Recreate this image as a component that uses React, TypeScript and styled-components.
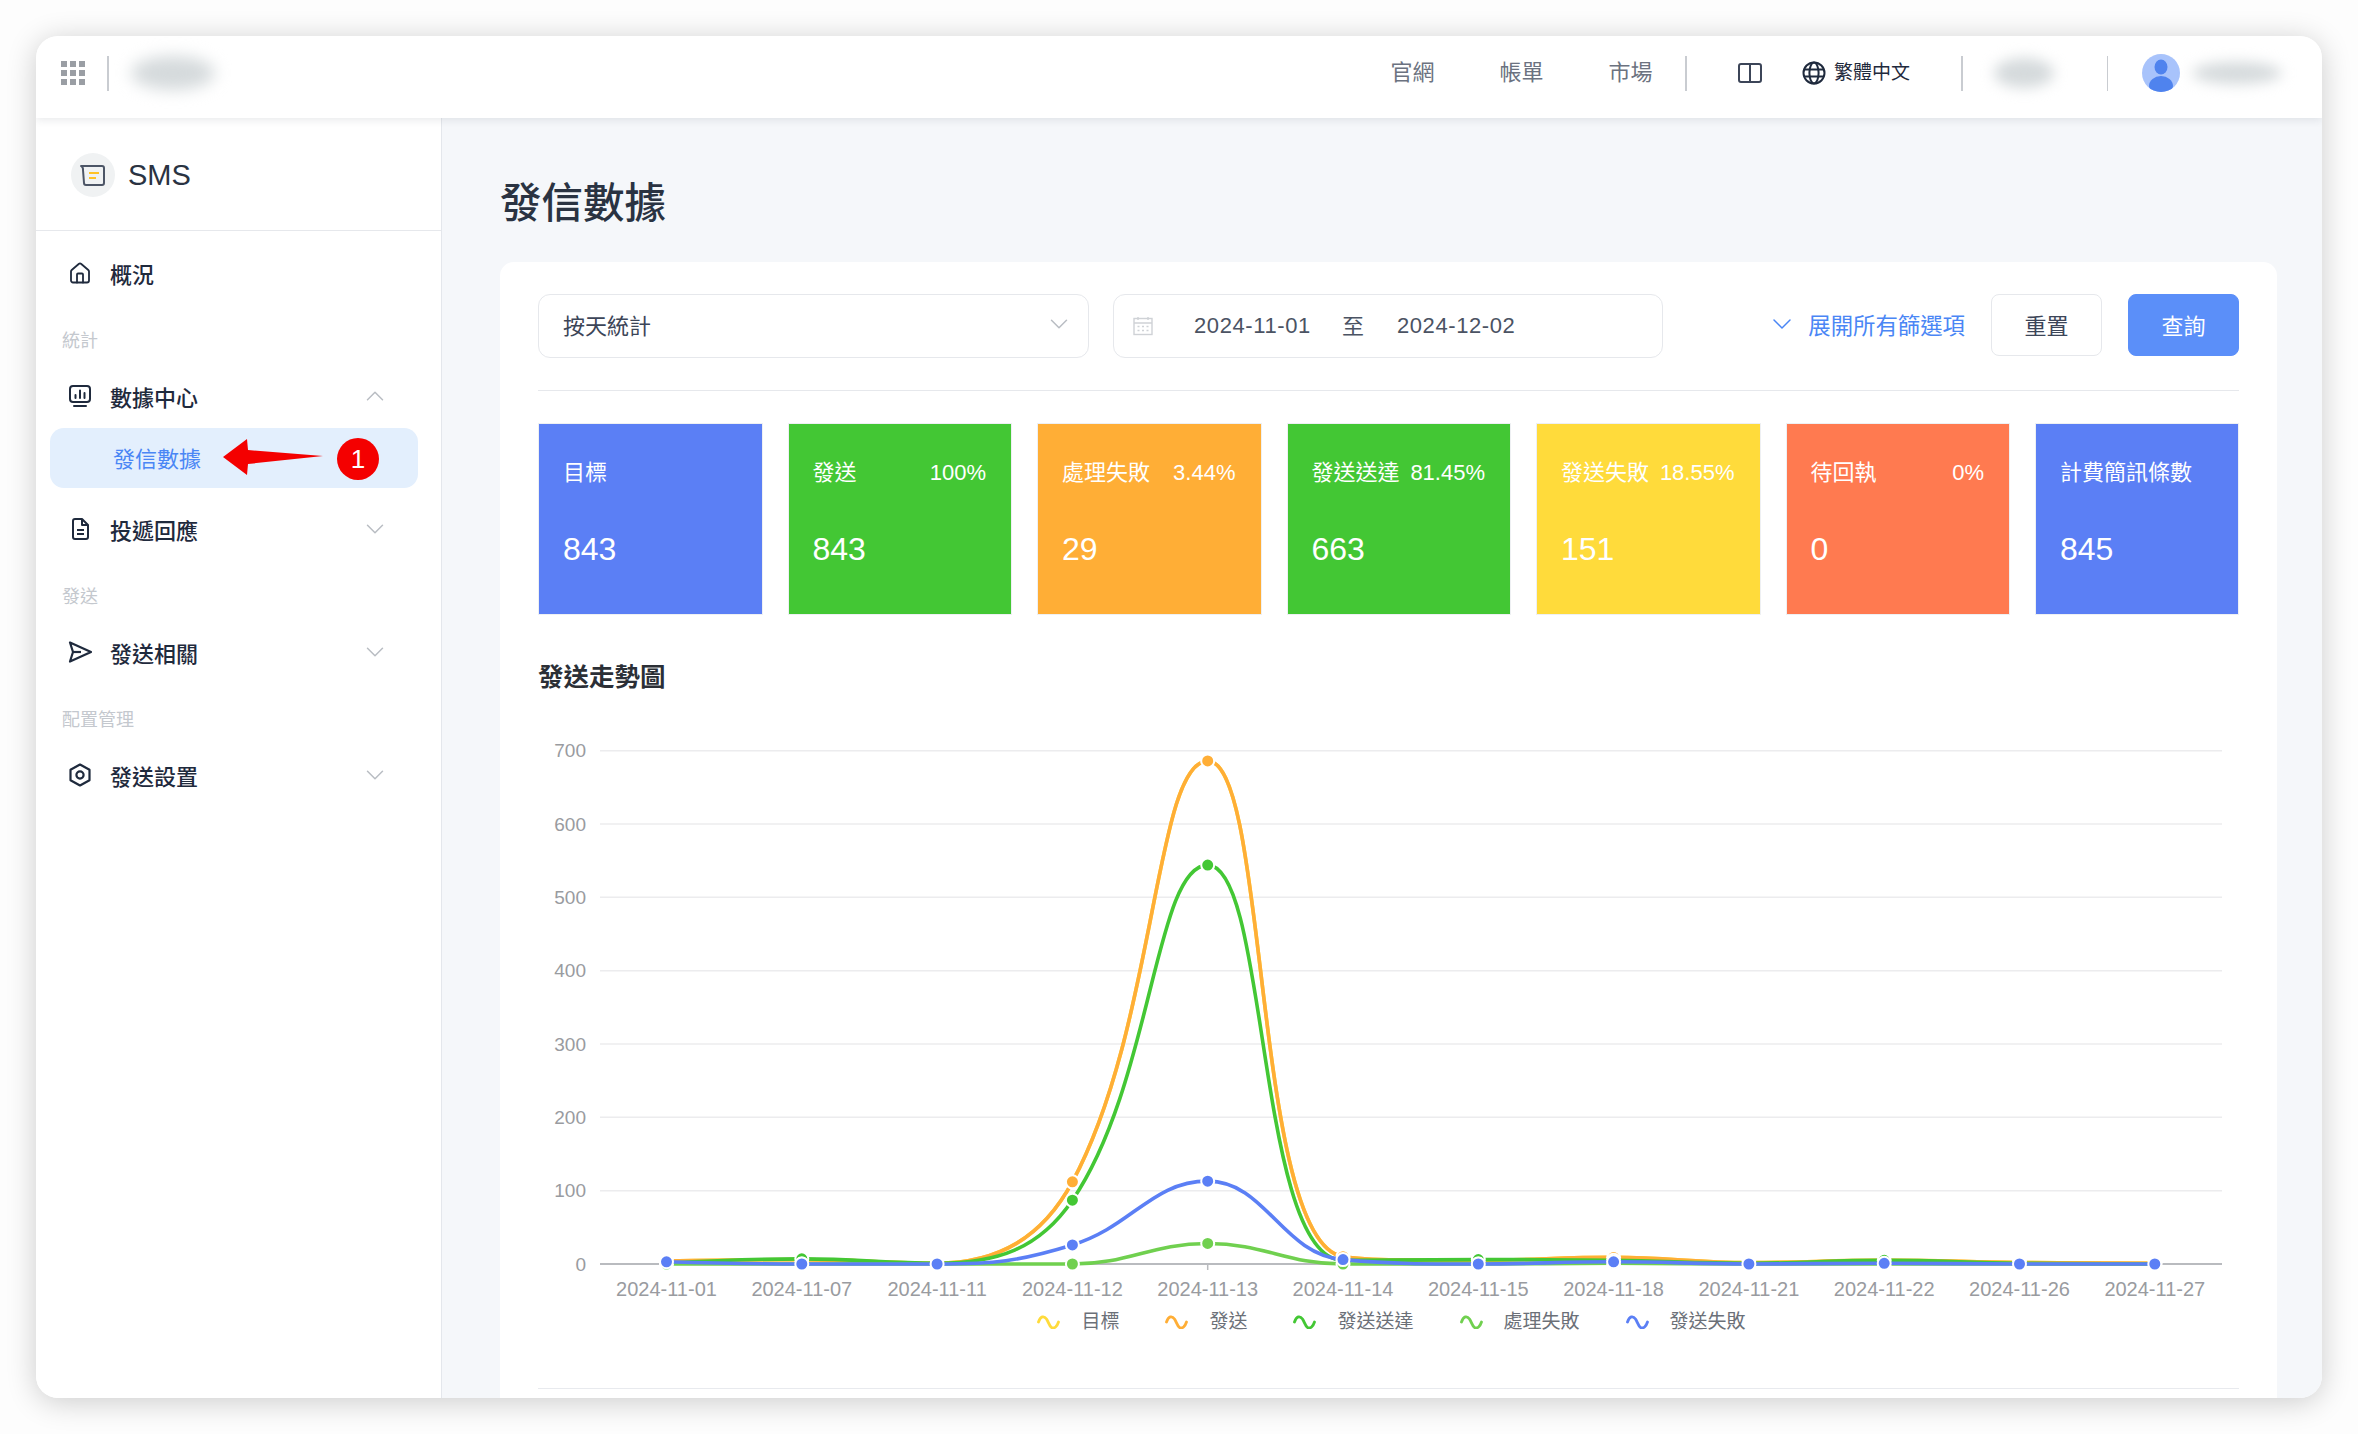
import React, { FC } from "react";
import styled, { createGlobalStyle } from "styled-components";
import { ChevronDown, ChevronUp, House } from "lucide-react";

const GlobalStyle = createGlobalStyle`
  html, body {
    margin: 0;
    padding: 0;
    background: #ffffff;
  }
  * {
    box-sizing: border-box;
  }
  body {
    font-family: "Liberation Sans", "Noto Sans CJK TC", sans-serif;
    color: #1f2a3d;
  }
`;

const Page = styled.div`
  width: 2358px;
  height: 1434px;
  padding: 36px;
  overflow: hidden;
  background: #fdfdfd;
`;

const Window = styled.div`
  display: flex;
  flex-direction: column;
  width: 2286px;
  height: 1362px;
  overflow: hidden;
  background: #ffffff;
  border-radius: 22px;
  box-shadow: 0 4px 30px rgba(0, 0, 0, 0.2);
`;

const TopBar = styled.header`
  position: relative;
  z-index: 2;
  display: flex;
  flex: none;
  align-items: center;
  height: 82px;
  padding-bottom: 8px;
  background: #ffffff;
  box-shadow: 0 2px 8px rgba(30, 40, 60, 0.1);
`;

const TopLeft = styled.div`
  display: flex;
  flex: 1;
  align-items: center;
  gap: 22px;
  padding-left: 25px;
`;

const Separator = styled.span`
  flex: none;
  width: 1.5px;
  height: 35px;
  background: #c9ccd1;
`;

const LogoBlur = styled.div`
  width: 84px;
  height: 34px;
  border-radius: 50%;
  background: #d5dadc;
  filter: blur(8px);
`;

const TopLinks = styled.nav`
  display: flex;
  gap: 65px;
  padding: 0 33px;
`;

const TopLink = styled.a`
  font-size: 22px;
  line-height: 30px;
  color: #6b7280;
`;

const Tools = styled.div`
  display: flex;
  align-items: center;
  padding: 0 51px;
`;

const LangGroup = styled.div`
  display: flex;
  align-items: center;
  gap: 8px;
  margin-left: 40px;
`;

const LangLabel = styled.span`
  font-size: 19px;
  line-height: 30px;
  color: #1f2a3d;
`;

const ChipSlot = styled.div`
  display: flex;
  justify-content: center;
  width: 144px;
  padding-right: 22px;
`;

const Chip = styled.div<{ $width: number; $height: number }>`
  width: ${(p) => p.$width}px;
  height: ${(p) => p.$height}px;
  border-radius: 50%;
  background: #d5dadc;
  filter: blur(7px);
`;

const UserBox = styled.div`
  display: flex;
  align-items: center;
  gap: 12px;
  padding: 0 40px 0 34px;
`;

const Body = styled.div`
  display: flex;
  flex: 1;
  min-height: 0;
`;

const Sidebar = styled.aside`
  flex: none;
  width: 406px;
  background: #ffffff;
  border-right: 1.5px solid #e4e7ec;
`;

const SideHead = styled.div`
  display: flex;
  align-items: center;
  gap: 13px;
  height: 113px;
  padding: 2px 0 0 35px;
  border-bottom: 1.5px solid #e6e8ec;
`;

const SideLogo = styled.div`
  display: flex;
  align-items: center;
  justify-content: center;
  width: 44px;
  height: 44px;
  border-radius: 50%;
  background: #f0f2f3;
`;

const SideTitle = styled.span`
  font-size: 29px;
  line-height: 36px;
  color: #2a3342;
`;

const Nav = styled.nav`
  padding-top: 12px;
`;

const NavItem = styled.div`
  display: flex;
  align-items: center;
  gap: 18px;
  height: 60px;
  padding: 0 51px 0 32px;
  font-size: 22px;
  font-weight: 500;
  color: #1f2a3d;
`;

const NavText = styled.span`
  flex: 1;
`;

const IconBox = styled.span`
  display: flex;
  flex: none;
  align-items: center;
  justify-content: center;
  width: 24px;
  height: 24px;
`;

const NavLabel = styled.div`
  height: 63px;
  padding: 25px 0 0 26px;
  font-size: 18px;
  line-height: 26px;
  color: #c4c8ce;
`;

const ActiveItem = styled.div`
  position: relative;
  height: 60px;
  margin: 2px 23px 11px 14px;
  padding-left: 63px;
  border-radius: 14px;
  background: #e3effd;
  font-size: 22px;
  line-height: 64px;
  color: #4a86f5;
`;

const RedArrow = styled.svg`
  position: absolute;
  top: 11px;
  left: 173px;
`;

const RedBadge = styled.span`
  position: absolute;
  top: 10px;
  left: 287px;
  width: 42px;
  height: 42px;
  border-radius: 50%;
  background: #f40000;
  font-size: 26px;
  line-height: 42px;
  text-align: center;
  color: #ffffff;
`;

const Main = styled.main`
  flex: 1;
  min-width: 0;
  overflow: hidden;
  padding: 0 45px 0 58px;
  background: #f5f7fa;
`;

const PageTitle = styled.h1`
  height: 144px;
  margin: 0;
  font-size: 41.5px;
  font-weight: 500;
  line-height: 171px;
  color: #2a3342;
`;

const Card = styled.section`
  height: 1200px;
  padding: 32px 38px;
  border-radius: 14px;
  background: #ffffff;
`;

const Filters = styled.div`
  display: flex;
  align-items: flex-start;
  padding-bottom: 32px;
  border-bottom: 1.5px solid #e6e8ec;
`;

const SelectBox = styled.div`
  display: flex;
  align-items: center;
  justify-content: space-between;
  width: 551px;
  height: 64px;
  padding: 0 14px 5px 24px;
  border: 1.5px solid #e6e8ec;
  border-radius: 12px;
  font-size: 22px;
  color: #3c4558;
`;

const DateBox = styled.div`
  display: flex;
  align-items: center;
  width: 550px;
  height: 64px;
  margin-left: 24px;
  padding-left: 19px;
  border: 1.5px solid #e6e8ec;
  border-radius: 12px;
  font-size: 22px;
  color: #4b5363;
`;

const DateValue = styled.span<{ $first?: boolean }>`
  margin-left: ${(p) => (p.$first ? 41 : 0)}px;
  letter-spacing: 0.6px;
`;

const DateGap = styled.span`
  margin: 0 33px 0 31px;
  padding-bottom: 5px;
`;

const Expand = styled.a`
  display: flex;
  align-items: center;
  gap: 10px;
  height: 62px;
  margin-left: auto;
  padding-bottom: 2px;
  font-size: 22.4px;
  color: #4a86f5;
`;

const Button = styled.button<{ $primary?: boolean }>`
  width: 111px;
  height: 62px;
  margin-left: 26px;
  padding: 0 0 3px;
  border: 1.5px solid ${(p) => (p.$primary ? "#5b8ff9" : "#e6e8ec")};
  border-radius: 8px;
  background: ${(p) => (p.$primary ? "#5b8ff9" : "#ffffff")};
  font-family: inherit;
  font-size: 22px;
  color: ${(p) => (p.$primary ? "#ffffff" : "#3c4558")};
`;

const Stats = styled.div`
  display: grid;
  grid-template-columns: repeat(6, 1fr) 204px;
  gap: 25px;
  margin-top: 32px;
`;

const StatCard = styled.div<{ $bg: string }>`
  height: 192px;
  padding: 34px 25px 0 24px;
  border: 1px solid #eef0f3;
  background: ${(p) => p.$bg};
  color: #ffffff;
`;

const StatHead = styled.div`
  display: flex;
  justify-content: space-between;
  font-size: 22px;
  line-height: 30px;
  white-space: nowrap;
`;

const StatValue = styled.div`
  margin-top: 41px;
  font-size: 32px;
  line-height: 40px;
`;

const ChartTitle = styled.h2`
  margin: 44px 0 0;
  font-size: 25.5px;
  font-weight: 700;
  line-height: 36px;
  color: #2b2f36;
`;

const ChartSvg = styled.svg`
  display: block;
  margin-top: 43px;
`;

const AxisText = styled.text<{ $size: number }>`
  font-family: "Liberation Sans", sans-serif;
  font-size: ${(p) => p.$size}px;
  fill: #999ba0;
`;

const Legend = styled.div`
  display: flex;
  justify-content: center;
  gap: 46px;
  height: 81px;
  margin-top: -12px;
  padding-left: 6px;
  border-bottom: 1.5px solid #e8eaee;
`;

const LegendItem = styled.div`
  display: flex;
  align-items: flex-start;
  gap: 21px;
  font-size: 19px;
  line-height: 28px;
  color: #6b7078;

  svg {
    margin-top: 7px;
  }
`;

const NAVY = "#1f2a3d";

const BLUE = "#5b7ff5";
const GREEN = "#43c734";
const ORANGE = "#ffae36";
const YELLOW = "#ffdb3b";
const CORAL = "#ff7a50";
const LIME = "#70d04f";

const stats = [
  { label: "目標", pct: "", value: "843", bg: BLUE },
  { label: "發送", pct: "100%", value: "843", bg: GREEN },
  { label: "處理失敗", pct: "3.44%", value: "29", bg: ORANGE },
  { label: "發送送達", pct: "81.45%", value: "663", bg: GREEN },
  { label: "發送失敗", pct: "18.55%", value: "151", bg: YELLOW },
  { label: "待回執", pct: "0%", value: "0", bg: CORAL },
  { label: "計費簡訊條數", pct: "", value: "845", bg: BLUE },
];

const dates = [
  "2024-11-01",
  "2024-11-07",
  "2024-11-11",
  "2024-11-12",
  "2024-11-13",
  "2024-11-14",
  "2024-11-15",
  "2024-11-18",
  "2024-11-21",
  "2024-11-22",
  "2024-11-26",
  "2024-11-27",
];

const sent = [4, 6, 1, 112, 686, 10, 5, 9, 2, 5, 2, 1];

const series = [
  { name: "目標", color: YELLOW, data: sent },
  { name: "發送", color: ORANGE, data: sent },
  { name: "發送送達", color: GREEN, data: [1, 7, 1, 87, 544, 5, 6, 5, 1, 5, 1, 0] },
  { name: "處理失敗", color: LIME, data: [0, 0, 0, 0, 28, 0, 0, 1, 0, 0, 0, 0] },
  { name: "發送失敗", color: BLUE, data: [3, 0, 0, 26, 113, 6, 0, 3, 0, 1, 0, 0] },
];

const CHART_W = 1701;
const CHART_H = 582;
const AXIS_Y = 526;
const UNIT = 0.7333;
const LEFT = 128.5;
const STEP = 135.3;
const SMOOTH = 0.42;

const px = (i: number) => LEFT + i * STEP;
const py = (v: number) => AXIS_Y - v * UNIT;

const between = (v: number, a: number, b: number) =>
  Math.max(Math.min(a, b), Math.min(Math.max(a, b), v));

// spline like the chart lib: handles stay collinear but never pass the neighbour's y
const smoothPath = (values: number[]) => {
  const pts = values.map((v, i) => [px(i), py(v)]);
  const into: number[][] = [];
  const out: number[][] = [];
  pts.forEach(([x, y], i) => {
    const [prevX, prevY] = pts[Math.max(i - 1, 0)];
    const [nextX, nextY] = pts[Math.min(i + 1, pts.length - 1)];
    const lenPrev = Math.hypot(x - prevX, y - prevY) || 1;
    const lenNext = Math.hypot(nextX - x, nextY - y) || 1;
    const ratio = lenNext / (lenNext + lenPrev);
    let ox = between(x + (nextX - prevX) * SMOOTH * ratio, x, nextX);
    let oy = between(y + (nextY - prevY) * SMOOTH * ratio, y, nextY);
    const ix = between(x - ((ox - x) * lenPrev) / lenNext, prevX, x);
    const iy = between(y - ((oy - y) * lenPrev) / lenNext, prevY, y);
    ox = x + ((x - ix) * lenNext) / lenPrev;
    oy = y + ((y - iy) * lenNext) / lenPrev;
    into.push([ix, iy]);
    out.push([ox, oy]);
  });
  let d = `M${pts[0][0]} ${pts[0][1]}`;
  for (let i = 1; i < pts.length; i++) {
    d += ` C${out[i - 1][0]} ${out[i - 1][1]} ${into[i][0]} ${into[i][1]} ${pts[i][0]} ${pts[i][1]}`;
  }
  return d;
};

const SmallChevron: FC<{ up?: boolean; size?: number }> = ({ up, size = 30 }) => {
  const Icon = up ? ChevronUp : ChevronDown;
  return <Icon size={size} color="#b9bdc3" strokeWidth={1.2} />;
};

const AppsIcon = () => (
  <svg width="24" height="24" viewBox="0 0 24 24" fill="#9a9ea4">
    {[0, 9, 18].map((y) =>
      [0, 9, 18].map((x) => <rect key={`${x}-${y}`} x={x} y={y} width="6" height="6" />)
    )}
  </svg>
);

const SmsIcon = () => (
  <svg width="28" height="24" viewBox="0 0 28 24" fill="none">
    <path
      d="M2 3h21a2 2 0 0 1 2 2v15a2 2 0 0 1-2 2H7a2 2 0 0 1-2-2L4 7a4 4 0 0 0-2-4z"
      stroke="#4c5566"
      strokeWidth="2"
      strokeLinejoin="round"
    />
    <path d="M10 10h10M10 15h7" stroke="#ffc226" strokeWidth="2" />
  </svg>
);

const ChartIcon = () => (
  <svg width="24" height="24" viewBox="0 0 24 24" fill="none" stroke={NAVY} strokeWidth="2">
    <rect x="2" y="2" width="20" height="16" rx="3" />
    <path d="M7.5 14v-3M12 14V6.5M16.5 14V9M6 22h12" strokeLinecap="round" />
  </svg>
);

const DocIcon = () => (
  <svg width="24" height="24" viewBox="0 0 24 24" fill="none" stroke={NAVY} strokeWidth="2" strokeLinejoin="round">
    <path d="M5 4a2 2 0 0 1 2-2h7l6 6v12a2 2 0 0 1-2 2H7a2 2 0 0 1-2-2z" />
    <path d="M14 2v6h6M9 13h7M9 17h7" />
  </svg>
);

const SendIcon = () => (
  <svg width="24" height="24" viewBox="0 0 24 24" fill="none" stroke={NAVY} strokeWidth="2.2" strokeLinejoin="round">
    <path d="M2 2.5L23 12 2 21.5 5 12z" />
    <path d="M5 12h8" />
  </svg>
);

const HexIcon = () => (
  <svg width="24" height="24" viewBox="0 0 24 24" fill="none" stroke={NAVY} strokeWidth="2.2" strokeLinejoin="round">
    <path d="M12 1.5l9.5 5.3v10.4L12 22.5l-9.5-5.3V6.800z" />
    <circle cx="12" cy="12" r="3.6" />
  </svg>
);

const BookIcon = () => (
  <svg width="24" height="22" viewBox="0 0 24 22" fill="none" stroke="#3c4558" strokeWidth="2">
    <rect x="1" y="2" width="22" height="18" rx="2" />
    <path d="M12 1v20" />
  </svg>
);

const GlobeIcon = () => (
  <svg width="24" height="24" viewBox="0 0 24 24" fill="none" stroke={NAVY} strokeWidth="2">
    <circle cx="12" cy="12" r="10.5" />
    <ellipse cx="12" cy="12" rx="4.6" ry="10.5" />
    <path d="M2 8.5h20M2 15.5h20" />
  </svg>
);

const AvatarIcon = () => (
  <svg width="38" height="38" viewBox="0 0 38 38">
    <defs>
      <clipPath id="avatar-clip">
        <circle cx="19" cy="19" r="19" />
      </clipPath>
    </defs>
    <circle cx="19" cy="19" r="19" fill="#a8c3fb" />
    <g clipPath="url(#avatar-clip)" fill="#4f83ee">
      <ellipse cx="19" cy="13" rx="6.5" ry="7.5" />
      <ellipse cx="19" cy="32" rx="12" ry="10" />
    </g>
  </svg>
);

const CalendarIcon = () => (
  <svg width="20" height="20" viewBox="0 0 20 20" fill="none" stroke="#cfd2d6" strokeWidth="1.4">
    <rect x="1" y="2.5" width="18" height="16" />
    <path d="M1 7h18M5 1v3M15 1v3M4.5 10.5h2M9 10.5h2M13.5 10.5h2M4.5 14.5h2M9 14.5h2M13.5 14.5h2" />
  </svg>
);

const WaveIcon: FC<{ color: string }> = ({ color }) => (
  <svg width="23" height="14" viewBox="0 0 23 14" fill="none">
    <path
      d="M1.5 7C3.5 1 7 .5 9.5 4c2 3 2.5 6.5 5 8.5 3 1.5 5.5-1 7-5.5"
      stroke={color}
      strokeWidth="2.8"
      strokeLinecap="round"
    />
  </svg>
);

const TrendChart = () => (
  <ChartSvg width={CHART_W} height={CHART_H} viewBox={`0 0 ${CHART_W} ${CHART_H}`}>
    {[100, 200, 300, 400, 500, 600, 700].map((v) => (
      <line key={v} x1="62" x2="1684" y1={py(v)} y2={py(v)} stroke="#ececee" strokeWidth="1.5" />
    ))}
    <line x1="62" x2="1684" y1={AXIS_Y} y2={AXIS_Y} stroke="#b9bbbf" strokeWidth="2" />
    {[0, 100, 200, 300, 400, 500, 600, 700].map((v) => (
      <AxisText key={v} $size={19} x="48" y={py(v) + 6.5} textAnchor="end">
        {v}
      </AxisText>
    ))}
    {dates.map((date, i) => (
      <g key={date}>
        <line x1={px(i)} x2={px(i)} y1={AXIS_Y} y2={AXIS_Y + 6} stroke="#b9bbbf" strokeWidth="1.5" />
        <AxisText $size={20} x={px(i)} y={AXIS_Y + 32} textAnchor="middle">
          {date}
        </AxisText>
      </g>
    ))}
    {series.map((s) => (
      <g key={s.name}>
        <path d={smoothPath(s.data)} fill="none" stroke={s.color} strokeWidth="3.6" />
        {s.data.map((v, i) => (
          <circle key={i} cx={px(i)} cy={py(v)} r="6.5" fill={s.color} stroke="#ffffff" strokeWidth="2" />
        ))}
      </g>
    ))}
  </ChartSvg>
);

export default function App() {
  return (
    <Page>
      <GlobalStyle />
      <Window>
        <TopBar>
          <TopLeft>
            <AppsIcon />
            <Separator />
            <LogoBlur />
          </TopLeft>
          <TopLinks>
            <TopLink>官網</TopLink>
            <TopLink>帳單</TopLink>
            <TopLink>市場</TopLink>
          </TopLinks>
          <Separator />
          <Tools>
            <BookIcon />
            <LangGroup>
              <GlobeIcon />
              <LangLabel>繁體中文</LangLabel>
            </LangGroup>
          </Tools>
          <Separator />
          <ChipSlot>
            <Chip $width={60} $height={30} />
          </ChipSlot>
          <Separator />
          <UserBox>
            <AvatarIcon />
            <Chip $width={90} $height={22} />
          </UserBox>
        </TopBar>
        <Body>
          <Sidebar>
            <SideHead>
              <SideLogo>
                <SmsIcon />
              </SideLogo>
              <SideTitle>SMS</SideTitle>
            </SideHead>
            <Nav>
              <NavItem>
                <IconBox>
                  <House size={27} color={NAVY} strokeWidth={1.8} />
                </IconBox>
                <NavText>概況</NavText>
              </NavItem>
              <NavLabel>統計</NavLabel>
              <NavItem>
                <IconBox>
                  <ChartIcon />
                </IconBox>
                <NavText>數據中心</NavText>
                <SmallChevron up />
              </NavItem>
              <ActiveItem>
                發信數據
                <RedArrow width="100" height="36" viewBox="0 0 100 36">
                  <path d="M0 18L24 0l1 11 75 6-75 8-1 11z" fill="#f40000" />
                </RedArrow>
                <RedBadge>1</RedBadge>
              </ActiveItem>
              <NavItem>
                <IconBox>
                  <DocIcon />
                </IconBox>
                <NavText>投遞回應</NavText>
                <SmallChevron />
              </NavItem>
              <NavLabel>發送</NavLabel>
              <NavItem>
                <IconBox>
                  <SendIcon />
                </IconBox>
                <NavText>發送相關</NavText>
                <SmallChevron />
              </NavItem>
              <NavLabel>配置管理</NavLabel>
              <NavItem>
                <IconBox>
                  <HexIcon />
                </IconBox>
                <NavText>發送設置</NavText>
                <SmallChevron />
              </NavItem>
            </Nav>
          </Sidebar>
          <Main>
            <PageTitle>發信數據</PageTitle>
            <Card>
              <Filters>
                <SelectBox>
                  按天統計
                  <SmallChevron />
                </SelectBox>
                <DateBox>
                  <CalendarIcon />
                  <DateValue $first>2024-11-01</DateValue>
                  <DateGap>至</DateGap>
                  <DateValue>2024-12-02</DateValue>
                </DateBox>
                <Expand>
                  <ChevronDown size={32} color="#4a86f5" strokeWidth={1.1} />
                  展開所有篩選項
                </Expand>
                <Button>重置</Button>
                <Button $primary>查詢</Button>
              </Filters>
              <Stats>
                {stats.map((s) => (
                  <StatCard key={s.label} $bg={s.bg}>
                    <StatHead>
                      <span>{s.label}</span>
                      <span>{s.pct}</span>
                    </StatHead>
                    <StatValue>{s.value}</StatValue>
                  </StatCard>
                ))}
              </Stats>
              <ChartTitle>發送走勢圖</ChartTitle>
              <TrendChart />
              <Legend>
                {series.map((s) => (
                  <LegendItem key={s.name}>
                    <WaveIcon color={s.color} />
                    {s.name}
                  </LegendItem>
                ))}
              </Legend>
            </Card>
          </Main>
        </Body>
      </Window>
    </Page>
  );
}
